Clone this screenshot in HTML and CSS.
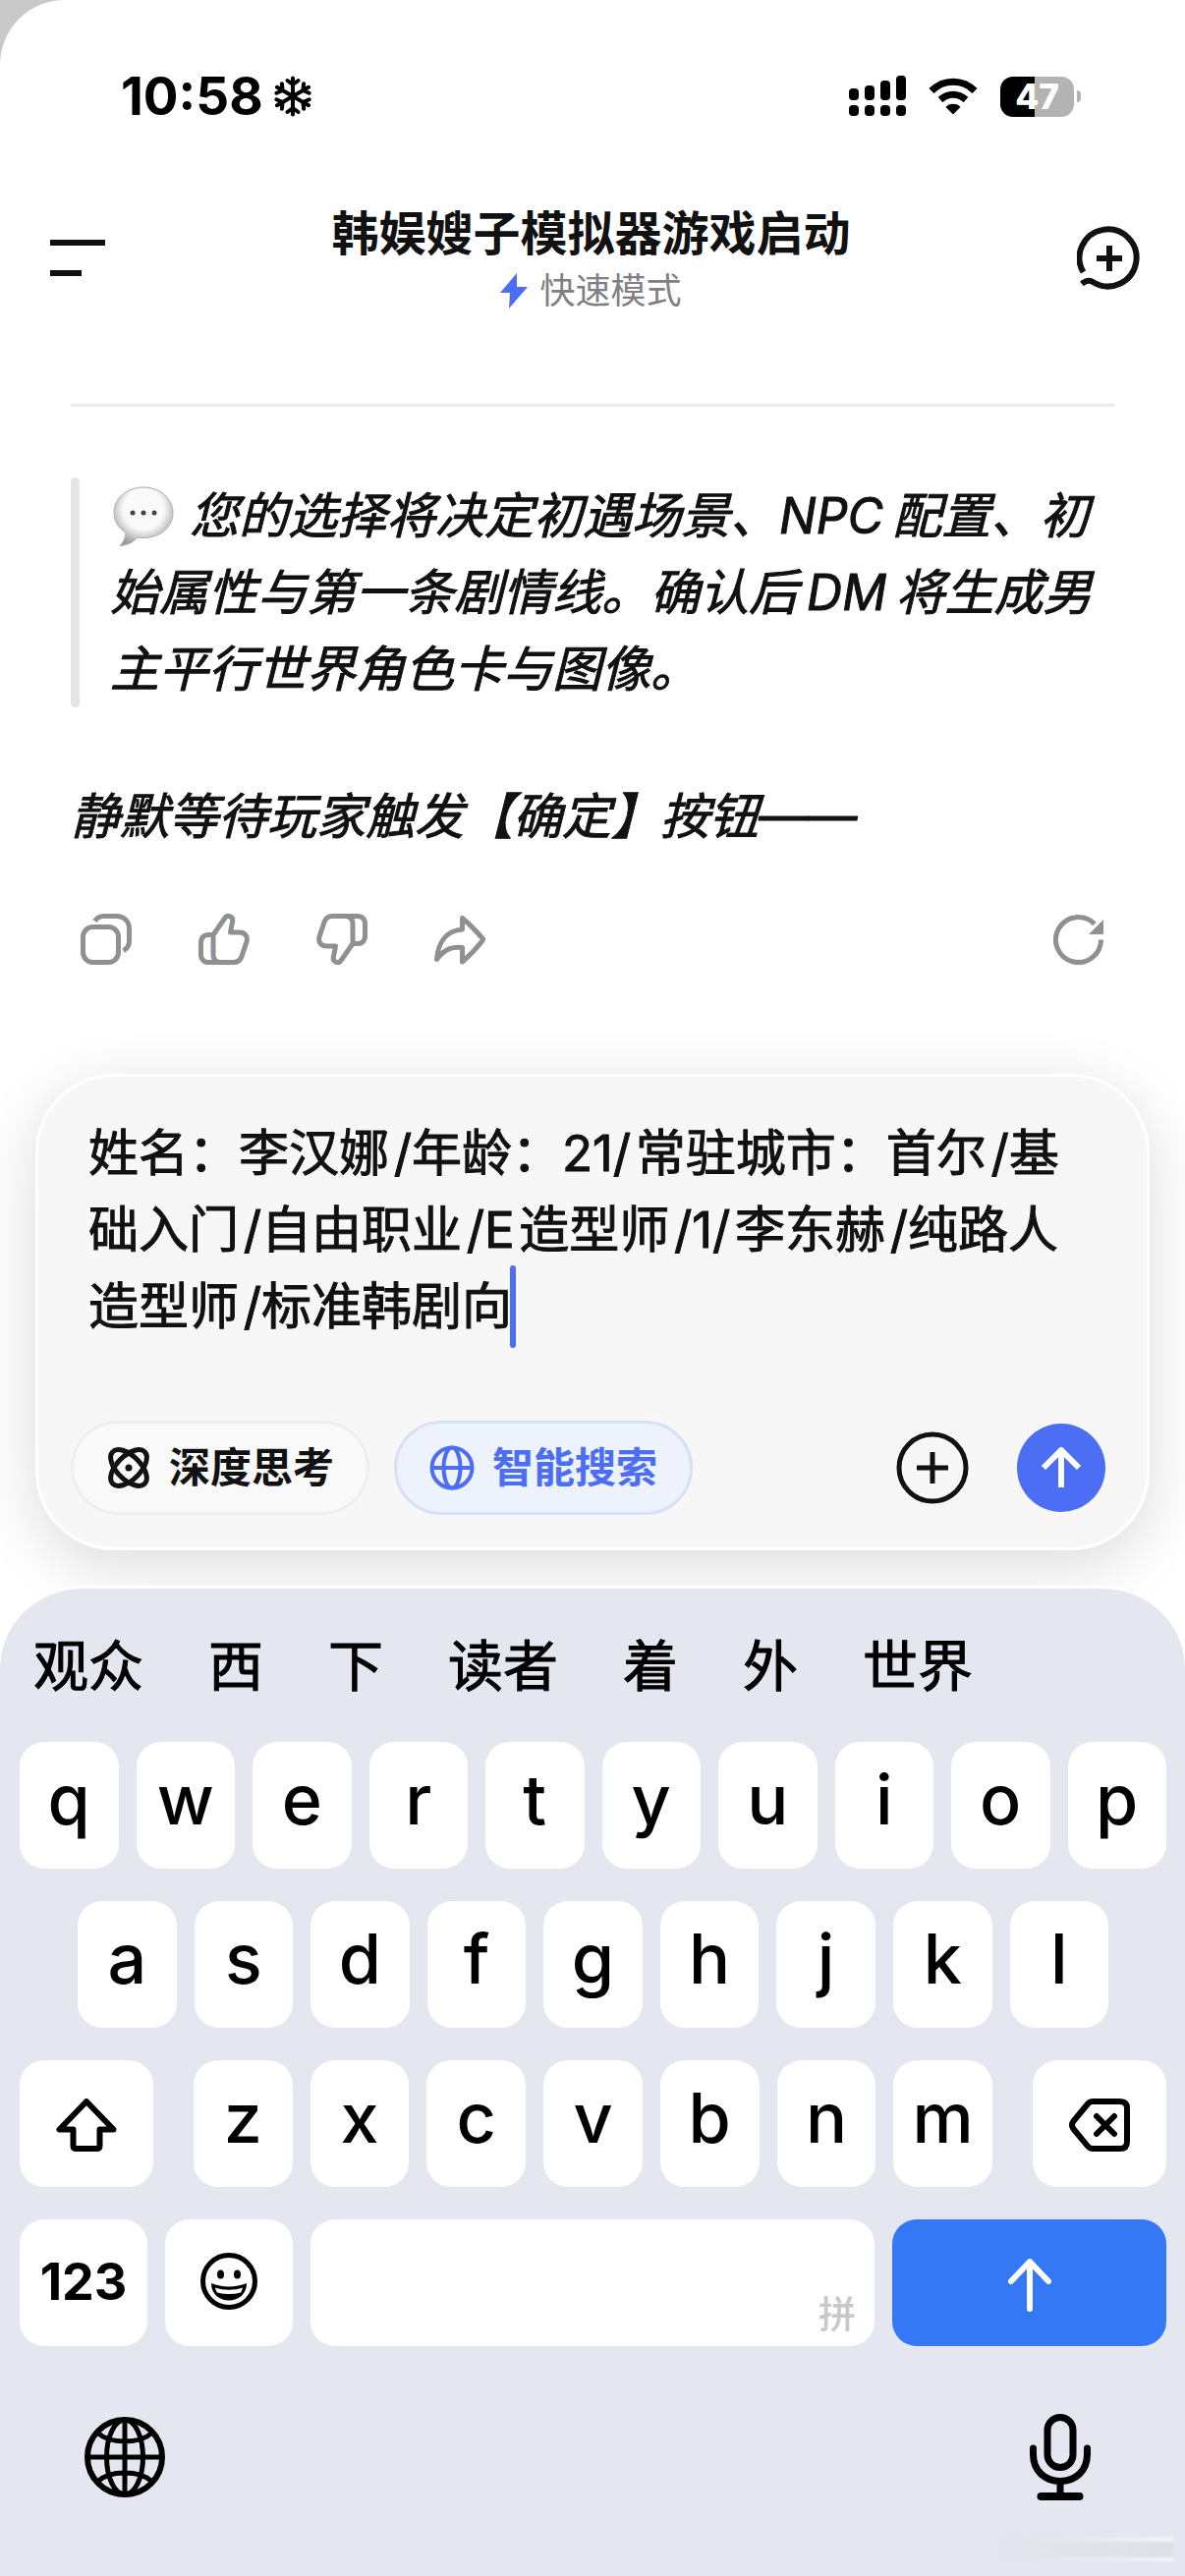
FILE: index.html
```html
<!DOCTYPE html>
<html lang="zh-CN">
<head>
    <meta charset="UTF-8">
    <meta name="viewport" content="width=device-width, initial-scale=1.0">
    <title>韩娱嫂子模拟器游戏启动</title>
    <link rel="stylesheet" href="styles.css">
</head>
<body>
    <div class="screen">
        <div class="status-bar">
            <div class="status-left">
                <span class="time">10:58</span>
                <svg class="snow" viewBox="0 0 38 42" fill="none" stroke="#000" stroke-width="4" stroke-linecap="round" stroke-linejoin="round">
                    <g id="arm"><path d="M19 21V2.500M13.500 5l5.500 4 5.500-4"/></g>
                    <use href="#arm" transform="rotate(60 19 21)"/>
                    <use href="#arm" transform="rotate(120 19 21)"/>
                    <use href="#arm" transform="rotate(180 19 21)"/>
                    <use href="#arm" transform="rotate(240 19 21)"/>
                    <use href="#arm" transform="rotate(300 19 21)"/>
                </svg>
            </div>
            <div class="status-right">
                <svg class="signal" viewBox="0 0 58 42">
                    <rect x="0" y="13" width="10" height="12" rx="4"/>
                    <rect x="16" y="10" width="10" height="15" rx="4"/>
                    <rect x="32" y="5" width="10" height="20" rx="4"/>
                    <rect x="48" y="0" width="10" height="25" rx="4"/>
                    <rect x="0" y="30" width="10" height="11" rx="4"/>
                    <rect x="16" y="30" width="10" height="11" rx="4"/>
                    <rect x="32" y="30" width="10" height="11" rx="4"/>
                    <rect x="48" y="30" width="10" height="11" rx="4"/>
                </svg>
                <svg class="wifi" viewBox="0 0 50 38">
                    <path d="M25 37.500l-7.500-7.500c3-4.500 12-4.500 15 0z"/>
                    <path d="M12 22.500c8-7 18-7 26 0" fill="none" stroke="#000" stroke-width="7"/>
                    <path d="M3 13.500c12-12.500 32-12.500 44 0" fill="none" stroke="#000" stroke-width="7"/>
                </svg>
                <div class="battery"><span>47</span></div>
            </div>
        </div>

        <header class="header">
            <button type="button" class="icon-btn" aria-label="菜单">
                <svg class="menu-icon" viewBox="0 0 56 38" fill="#111"><rect y="0" width="56" height="6"/><rect y="31" width="32" height="6"/></svg>
            </button>
            <div class="header-title">
                <h1>韩娱嫂子模拟器游戏启动</h1>
                <p><svg class="bolt" viewBox="0 0 28 36"><path d="M17 0L0 20h10L9 36 28 14H17z" fill="#4b6ef5"/></svg>快速模式</p>
            </div>
            <button type="button" class="icon-btn" aria-label="新对话">
                <svg class="new-chat" viewBox="0 0 66 66" fill="none" stroke="#111" stroke-width="6">
                    <path d="M6.500 47A29 29 0 1 1 17 57.500C13.500 55 9 55.500 5 59"/>
                    <path d="M33 20v26M20 33h26"/>
                </svg>
            </button>
        </header>

        <main class="chat">
            <hr>
            <blockquote>
                <svg class="bubble" viewBox="0 0 62 62">
                    <defs>
                        <radialGradient id="bubbleFill" cx="50%" cy="38%" r="62%">
                            <stop offset="0.550" stop-color="#fafafa"/>
                            <stop offset="1" stop-color="#9c9c9c"/>
                        </radialGradient>
                    </defs>
                    <path d="M31 1C14 1 1 12 1 26.500c0 9 4.500 16 12 20.500 0 5-2.500 10-6 13.500 7 0 14-4 18-8.500 2 .300 4 .500 6 .500 17 0 30-11 30-25.500S48 1 31 1z" fill="url(#bubbleFill)" stroke="#b0b0b0"/>
                    <circle cx="20" cy="27" r="2.500" fill="#444"/><circle cx="31" cy="27" r="2.500" fill="#444"/><circle cx="42" cy="27" r="2.500" fill="#444"/>
                </svg>您的选择将决定初遇场景、NPC&thinsp;配置、初始属性与第一条剧情线。确认后&thinsp;DM&thinsp;将生成男主平行世界角色卡与图像。
            </blockquote>
            <p class="waiting">静默等待玩家触发【确定】按钮——</p>
            <div class="actions">
                <button type="button" aria-label="复制">
                    <svg viewBox="0 0 52 52"><rect x="2.500" y="13.500" width="36" height="36" rx="10"/><path d="M14.500 7.500c2-3 5-5 9-5H36c8 0 13.500 5 13.500 13v12.500c0 4-2 7.500-6 9.500"/></svg>
                </button>
                <button type="button" aria-label="赞">
                    <svg viewBox="0 0 52 52"><path d="M15 21.500L26.500 5c3-5 9.500-2 8 3.500L32.500 19H42c5.500 0 8.500 4.500 7 9.500l-5 15c-1.500 4-3.500 6-8 6H23c-5 0-8-3-8-8zM15 21.500h-4.500c-5 0-8 3-8 8v12c0 5 3 8 8 8H23"/></svg>
                </button>
                <button type="button" aria-label="踩">
                    <svg viewBox="0 0 52 52"><path d="M37 30.500L25.500 47c-3 5-9.500 2-8-3.500L19.500 33H10c-5.500 0-8.500-4.500-7-9.500l5-15c1.500-4 3.500-6 8-6H29c5 0 8 3 8 8zM37 30.500h4.500c5 0 8-3 8-8v-12c0-5-3-8-8-8H29"/></svg>
                </button>
                <button type="button" aria-label="分享">
                    <svg viewBox="0 0 52 52"><path d="M28.500 4.500V16C14 17 4 27 2.500 46.500 11 35 19 33.500 28.500 34.500v14.500c7-6 14-13 20.500-21.500q1-1.500 0-2.500C42 17 35 10 28.500 4.500z"/></svg>
                </button>
                <button type="button" class="refresh" aria-label="重新生成">
                    <svg viewBox="0 0 52 52"><path d="M48.500 26.500A23 23 0 1 1 42 10.500"/><path d="M51 6v15H36z" fill="#8f9093" stroke="none"/></svg>
                </button>
            </div>
        </main>

        <form class="composer">
            <div class="input-wrap">
                <textarea rows="3" aria-label="消息" spellcheck="false">姓名：李汉娜&hairsp;/年龄：21/&hairsp;常驻城市：首尔&hairsp;/基础入门&hairsp;/自由职业&hairsp;/E&hairsp;造型师&hairsp;/1/&hairsp;李东赫&hairsp;/纯路人造型师&hairsp;/标准韩剧向</textarea>
                <span class="caret"></span>
            </div>
            <div class="tools">
                <button type="button" class="pill">
                    <svg viewBox="0 0 46 46" fill="none" stroke="currentColor" stroke-width="5"><ellipse cx="23" cy="23" rx="12" ry="23" transform="rotate(45 23 23)"/><ellipse cx="23" cy="23" rx="12" ry="23" transform="rotate(-45 23 23)"/><circle cx="23" cy="23" r="3.500" fill="currentColor" stroke="none"/></svg>深度思考
                </button>
                <button type="button" class="pill pill-active">
                    <svg viewBox="0 0 46 46" fill="none" stroke="currentColor" stroke-width="4"><circle cx="23" cy="23" r="20.500"/><ellipse cx="23" cy="23" rx="8.500" ry="20.500"/><path d="M3 23h40"/></svg>智能搜索
                </button>
                <button type="button" class="add-btn" aria-label="添加">
                    <svg viewBox="0 0 74 74" fill="none" stroke="#111" stroke-width="5"><circle cx="37" cy="37" r="34"/><path d="M37 21v32M21 37h32"/></svg>
                </button>
                <button type="submit" class="send-btn" aria-label="发送">
                    <svg viewBox="0 0 42 42" fill="none" stroke="#fff" stroke-width="6"><path d="M21 41V4M3 21L21 3l18 18"/></svg>
                </button>
            </div>
        </form>

        <div class="keyboard">
            <div class="candidates">
                <button type="button">观众</button>
                <button type="button">西</button>
                <button type="button">下</button>
                <button type="button">读者</button>
                <button type="button">着</button>
                <button type="button">外</button>
                <button type="button">世界</button>
            </div>
            <div class="row">
                <button type="button" class="key">q</button>
                <button type="button" class="key">w</button>
                <button type="button" class="key">e</button>
                <button type="button" class="key">r</button>
                <button type="button" class="key">t</button>
                <button type="button" class="key">y</button>
                <button type="button" class="key">u</button>
                <button type="button" class="key">i</button>
                <button type="button" class="key">o</button>
                <button type="button" class="key">p</button>
            </div>
            <div class="row row-middle">
                <button type="button" class="key">a</button>
                <button type="button" class="key">s</button>
                <button type="button" class="key">d</button>
                <button type="button" class="key">f</button>
                <button type="button" class="key">g</button>
                <button type="button" class="key">h</button>
                <button type="button" class="key">j</button>
                <button type="button" class="key">k</button>
                <button type="button" class="key">l</button>
            </div>
            <div class="row">
                <button type="button" class="key key-side" aria-label="Shift">
                    <svg class="shift-icon" viewBox="0 0 62 54" fill="none" stroke="#000" stroke-width="6" stroke-linejoin="round"><path d="M31 3L3.500 31.500h14V48q0 3 3 3h21q3 0 3-3V31.500h14z"/></svg>
                </button>
                <div class="row row-letters">
                    <button type="button" class="key">z</button>
                    <button type="button" class="key">x</button>
                    <button type="button" class="key">c</button>
                    <button type="button" class="key">v</button>
                    <button type="button" class="key">b</button>
                    <button type="button" class="key">n</button>
                    <button type="button" class="key">m</button>
                </div>
                <button type="button" class="key key-side" aria-label="删除">
                    <svg class="delete-icon" viewBox="0 0 62 54" fill="none" stroke="#000" stroke-width="6" stroke-linecap="round" stroke-linejoin="round"><path d="M24 3h28q7 0 7 7v34q0 7-7 7H24q-3 0-5-2.500L4.500 31q-3-4 0-8L19 5.500Q21 3 24 3zM28 18l18 18M46 18L28 36"/></svg>
                </button>
            </div>
            <div class="row">
                <button type="button" class="key key-wide key-num">123</button>
                <button type="button" class="key key-wide" aria-label="表情">
                    <svg class="emoji-icon" viewBox="0 0 58 58"><circle cx="29" cy="29" r="26.500" fill="none" stroke="#000" stroke-width="5"/><ellipse cx="20.500" cy="22" rx="3.500" ry="4.500"/><ellipse cx="37.500" cy="22" rx="3.500" ry="4.500"/><path d="M11 31c11 4.500 25 4.500 36 0 0 11-8 17.500-18 17.500S11 42 11 31z"/><path d="M15 35.500c9 3 19 3 28 0-.500 2-1 3.500-2 5-8 2-16 2-24 0-1-1.500-1.500-3-2-5z" fill="#fff"/></svg>
                </button>
                <button type="button" class="key key-space" aria-label="空格">拼</button>
                <button type="button" class="key key-send" aria-label="发送">
                    <svg class="arrow-icon" viewBox="0 0 44 54" fill="none" stroke="#fff" stroke-width="6" stroke-linecap="round" stroke-linejoin="round"><path d="M22 51V4M3 23L22 3l19 20"/></svg>
                </button>
            </div>
            <div class="keyboard-foot">
                <button type="button" class="icon-btn" aria-label="切换键盘">
                    <svg class="globe" viewBox="0 0 82 82" fill="none" stroke="#000" stroke-width="5"><circle cx="41" cy="41" r="38" stroke-width="6"/><ellipse cx="41" cy="41" rx="18.500" ry="38"/><path d="M41 3v76M3 41h76M13 16c13 12 43 12 56 0M13 66c13-12 43-12 56 0"/></svg>
                </button>
                <button type="button" class="icon-btn" aria-label="听写">
                    <svg class="mic" viewBox="0 0 62 88" fill="none" stroke="#000" stroke-width="7" stroke-linecap="round"><rect x="18" y="3.500" width="26" height="51" rx="13"/><path d="M3.500 35v6c0 17 12 27.500 27.500 27.500S58.500 58 58.500 41v-6M31 69v14"/><path d="M11.500 84h39" stroke-width="8"/></svg>
                </button>
            </div>
            <div class="smudge"></div>
        </div>
    </div>
</body>
</html>
```
FILE: styles.css
```css
* {
    box-sizing: border-box;
}
body {
    margin: 0;
    background-color: #c9c9c9;
    color: #111;
    font-family: Inter, "Noto Sans CJK SC", sans-serif;
}
h1, p, hr, blockquote {
    margin: 0;
}
button {
    border: none;
    padding: 0;
    background: none;
    color: inherit;
    font-family: inherit;
    cursor: pointer;
}
svg {
    display: block;
}
.screen {
    min-height: 100vh;
    display: flex;
    flex-direction: column;
    background-color: #fff;
    border-top-left-radius: 66px;
    overflow: hidden;
}

/* status bar */
.status-bar {
    height: 196px;
    padding: 0 113px 0 123px;
    display: flex;
    justify-content: space-between;
    align-items: center;
    color: #000;
}
.status-left, .status-right {
    display: flex;
    align-items: center;
}
.status-left {
    gap: 11px;
}
.status-right {
    gap: 23px;
}
.time {
    font-size: 53px;
    font-weight: 700;
}
.snow {
    width: 38px;
    height: 42px;
}
.signal {
    width: 58px;
    height: 42px;
}
.wifi {
    width: 50px;
    height: 38px;
}
.battery {
    position: relative;
    width: 75px;
    height: 41px;
    border-radius: 13px;
    background: linear-gradient(to right, #000 47%, #b3b3b3 47%);
    color: #fff;
    font-size: 35px;
    font-weight: 800;
    line-height: 41px;
    text-align: center;
}
.battery::after {
    content: "";
    position: absolute;
    right: -7px;
    top: 14px;
    width: 4px;
    height: 12px;
    border-radius: 0 4px 4px 0;
    background-color: #b3b3b3;
}

/* header */
.header {
    padding: 12px 44px 0 51px;
    display: flex;
    justify-content: space-between;
    align-items: center;
}
.header .icon-btn {
    padding-bottom: 6px;
}
.header-title {
    text-align: center;
}
.header-title h1 {
    font-size: 48px;
    line-height: 60px;
    font-weight: 600;
}
.header-title p {
    display: flex;
    justify-content: center;
    align-items: center;
    gap: 12px;
    font-size: 36px;
    line-height: 56px;
    color: #808084;
}
.bolt {
    width: 28px;
    height: 36px;
}
.menu-icon {
    width: 56px;
    height: 38px;
}
.new-chat {
    width: 66px;
    height: 66px;
}

/* conversation */
.chat {
    padding: 87px 72px 0;
    font-size: 50px;
    line-height: 78px;
    -webkit-text-stroke: 1px #111;
}
hr {
    border: none;
    height: 3px;
    background-color: #ebebeb;
}
blockquote {
    position: relative;
    margin-top: 72px;
    padding-left: 40px;
    font-style: italic;
}
blockquote::before {
    content: "";
    position: absolute;
    left: 0;
    top: 0;
    bottom: 0;
    width: 9px;
    border-radius: 5px;
    background-color: #e5e5e5;
}
.bubble {
    display: inline-block;
    width: 62px;
    height: 62px;
    margin: 0 16px 0 3px;
    vertical-align: -14px;
}
.waiting {
    margin-top: 72px;
    font-style: italic;
}
.actions {
    display: flex;
    gap: 68px;
    margin-top: 60px;
    padding: 0 10px;
}
.actions svg {
    width: 52px;
    height: 52px;
    fill: none;
    stroke: #8f9093;
    stroke-width: 5px;
    stroke-linejoin: round;
}
.refresh {
    margin-left: auto;
}

/* message box */
.composer {
    margin: 111px 36px 0;
    padding: 39px 33px 33px;
    border: 3px solid #fff;
    border-radius: 80px;
    background-color: #f7f7f7;
    box-shadow: 0 16px 64px rgba(0, 0, 0, 0.14);
}
.input-wrap {
    position: relative;
    padding: 0 18px;
}
textarea {
    display: block;
    width: 100%;
    height: 234px;
    padding: 0;
    border: none;
    outline: none;
    resize: none;
    overflow: hidden;
    background: none;
    color: #111;
    font-family: inherit;
    font-size: 51px;
    line-height: 78px;
    -webkit-text-stroke: 1px #111;
}
.caret {
    position: absolute;
    left: 447px;
    bottom: -3px;
    width: 6px;
    height: 84px;
    border-radius: 3px;
    background-color: #4b6ef5;
}
.tools {
    display: flex;
    align-items: center;
    margin-top: 77px;
}
.pill {
    display: flex;
    align-items: center;
    gap: 18px;
    height: 96px;
    margin-right: 25px;
    padding: 0 33px;
    border: 3px solid #eee;
    border-radius: 48px;
    background-color: #f9f9f9;
    font-size: 42px;
    line-height: 84px;
    font-weight: 600;
}
.pill svg {
    width: 46px;
    height: 46px;
}
.pill-active {
    border-color: #d6e0f7;
    background-color: #edf2fd;
    color: #4b6ef5;
}
.add-btn {
    margin-left: auto;
    margin-right: 49px;
}
.add-btn svg {
    width: 74px;
    height: 74px;
}
.send-btn {
    display: flex;
    justify-content: center;
    align-items: center;
    width: 90px;
    height: 90px;
    margin-right: 9px;
    border-radius: 50%;
    background-color: #4b6ef5;
}
.send-btn svg {
    width: 42px;
    height: 42px;
}

/* keyboard */
.keyboard {
    position: relative;
    flex: 1;
    display: flex;
    flex-direction: column;
    gap: 33px;
    margin-top: 36px;
    padding: 0 19px 78px 20px;
    border-top: 3px solid #fff;
    border-radius: 84px 84px 0 0;
    background-color: #e4e7ef;
    color: #000;
}
.candidates {
    display: flex;
    align-items: center;
    gap: 66px;
    height: 123px;
    padding: 34px 0 0 14px;
}
.candidates button {
    font-size: 56px;
    line-height: 80px;
    -webkit-text-stroke: 1px #000;
}
.row {
    display: flex;
    gap: 18px;
}
.row-middle {
    padding: 0 59px;
}
.row-letters {
    flex: 1;
    padding: 0 23px;
}
.key {
    flex: 1;
    display: flex;
    justify-content: center;
    align-items: center;
    height: 129px;
    padding-bottom: 12px;
    border-radius: 25px;
    background-color: #fff;
    font-size: 70px;
    font-weight: 500;
}
.key-side {
    flex: 0 0 136px;
    padding: 3px 0 0;
}
.key-wide {
    flex: 0 0 130px;
    padding: 0 0 3px;
}
.key-num {
    font-size: 52px;
    font-weight: 700;
}
.key-space {
    justify-content: flex-end;
    align-items: flex-end;
    padding: 0 19px 8px;
    color: #c8c8ca;
    font-size: 38px;
}
.key-send {
    flex: 0 0 279px;
    padding: 4px 0 0;
    background-color: #3478f6;
}
.shift-icon, .delete-icon {
    width: 62px;
    height: 54px;
}
.emoji-icon {
    width: 58px;
    height: 58px;
}
.arrow-icon {
    width: 44px;
    height: 54px;
}
.keyboard-foot {
    display: flex;
    justify-content: space-between;
    align-items: center;
    margin-top: 36px;
    padding: 0 77px 0 66px;
}
.globe {
    width: 82px;
    height: 82px;
}
.mic {
    width: 62px;
    height: 88px;
}
.smudge {
    position: absolute;
    right: 12px;
    bottom: 16px;
    width: 180px;
    height: 24px;
    background:
        linear-gradient(to right, transparent 20%, #f4f5f8) top / 100% 4px no-repeat,
        linear-gradient(to right, transparent 20%, #f4f5f8) bottom / 100% 4px no-repeat,
        linear-gradient(to right, transparent, #dddfe6);
    filter: blur(1px);
}
```
